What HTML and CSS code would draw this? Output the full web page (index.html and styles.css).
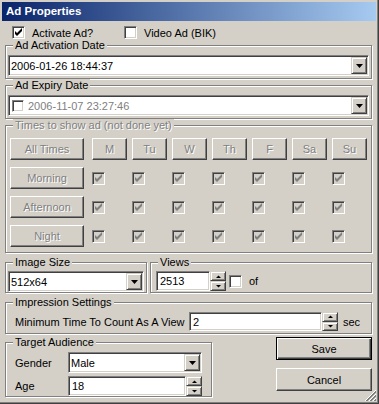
FILE: index.html
```html
<!DOCTYPE html>
<html lang="en">
<head>
    <meta charset="UTF-8">
    <meta name="viewport" content="width=device-width, initial-scale=1.0">
    <title>Ad Properties</title>
    <link rel="stylesheet" href="styles.css">
</head>
<body>
<div class="window">
    <div class="titlebar">Ad Properties</div>

    <div class="content">
        <div class="top-checks">
            <label class="check"><span class="box"><svg width="9" height="9" viewBox="0 0 9 9"><path d="M1 3L3 5L8 0V3L3 8L1 6Z"/></svg></span>Activate Ad?</label>
            <label class="check"><span class="box"></span>Video Ad (BIK)</label>
        </div>

        <fieldset class="group g-date">
            <legend>Ad Activation Date</legend>
            <div class="inner">
                <div class="combo">
                    <span class="combo-text">2006-01-26 18:44:37</span>
                    <span class="drop-btn"><svg width="7" height="4" viewBox="0 0 7 4"><path d="M0 0H7L3.5 4Z"/></svg></span>
                </div>
            </div>
        </fieldset>

        <fieldset class="group g-date">
            <legend>Ad Expiry Date</legend>
            <div class="inner">
                <div class="combo">
                    <span class="box small"></span>
                    <span class="combo-text grey">2006-11-07 23:27:46</span>
                    <span class="drop-btn"><svg width="7" height="4" viewBox="0 0 7 4"><path d="M0 0H7L3.5 4Z"/></svg></span>
                </div>
            </div>
        </fieldset>

        <fieldset class="group g-times">
            <legend class="disabled">Times to show ad (not done yet)</legend>
            <div class="times">
                <button type="button" class="btn disabled">All Times</button>
                <button type="button" class="btn disabled">M</button>
                <button type="button" class="btn disabled">Tu</button>
                <button type="button" class="btn disabled">W</button>
                <button type="button" class="btn disabled">Th</button>
                <button type="button" class="btn disabled">F</button>
                <button type="button" class="btn disabled">Sa</button>
                <button type="button" class="btn disabled">Su</button>

                <button type="button" class="btn disabled">Morning</button>
                <span class="box off"><svg width="9" height="9" viewBox="0 0 9 9"><path d="M1 3L3 5L8 0V3L3 8L1 6Z"/></svg></span>
                <span class="box off"><svg width="9" height="9" viewBox="0 0 9 9"><path d="M1 3L3 5L8 0V3L3 8L1 6Z"/></svg></span>
                <span class="box off"><svg width="9" height="9" viewBox="0 0 9 9"><path d="M1 3L3 5L8 0V3L3 8L1 6Z"/></svg></span>
                <span class="box off"><svg width="9" height="9" viewBox="0 0 9 9"><path d="M1 3L3 5L8 0V3L3 8L1 6Z"/></svg></span>
                <span class="box off"><svg width="9" height="9" viewBox="0 0 9 9"><path d="M1 3L3 5L8 0V3L3 8L1 6Z"/></svg></span>
                <span class="box off"><svg width="9" height="9" viewBox="0 0 9 9"><path d="M1 3L3 5L8 0V3L3 8L1 6Z"/></svg></span>
                <span class="box off"><svg width="9" height="9" viewBox="0 0 9 9"><path d="M1 3L3 5L8 0V3L3 8L1 6Z"/></svg></span>

                <button type="button" class="btn disabled">Afternoon</button>
                <span class="box off"><svg width="9" height="9" viewBox="0 0 9 9"><path d="M1 3L3 5L8 0V3L3 8L1 6Z"/></svg></span>
                <span class="box off"><svg width="9" height="9" viewBox="0 0 9 9"><path d="M1 3L3 5L8 0V3L3 8L1 6Z"/></svg></span>
                <span class="box off"><svg width="9" height="9" viewBox="0 0 9 9"><path d="M1 3L3 5L8 0V3L3 8L1 6Z"/></svg></span>
                <span class="box off"><svg width="9" height="9" viewBox="0 0 9 9"><path d="M1 3L3 5L8 0V3L3 8L1 6Z"/></svg></span>
                <span class="box off"><svg width="9" height="9" viewBox="0 0 9 9"><path d="M1 3L3 5L8 0V3L3 8L1 6Z"/></svg></span>
                <span class="box off"><svg width="9" height="9" viewBox="0 0 9 9"><path d="M1 3L3 5L8 0V3L3 8L1 6Z"/></svg></span>
                <span class="box off"><svg width="9" height="9" viewBox="0 0 9 9"><path d="M1 3L3 5L8 0V3L3 8L1 6Z"/></svg></span>

                <button type="button" class="btn disabled">Night</button>
                <span class="box off"><svg width="9" height="9" viewBox="0 0 9 9"><path d="M1 3L3 5L8 0V3L3 8L1 6Z"/></svg></span>
                <span class="box off"><svg width="9" height="9" viewBox="0 0 9 9"><path d="M1 3L3 5L8 0V3L3 8L1 6Z"/></svg></span>
                <span class="box off"><svg width="9" height="9" viewBox="0 0 9 9"><path d="M1 3L3 5L8 0V3L3 8L1 6Z"/></svg></span>
                <span class="box off"><svg width="9" height="9" viewBox="0 0 9 9"><path d="M1 3L3 5L8 0V3L3 8L1 6Z"/></svg></span>
                <span class="box off"><svg width="9" height="9" viewBox="0 0 9 9"><path d="M1 3L3 5L8 0V3L3 8L1 6Z"/></svg></span>
                <span class="box off"><svg width="9" height="9" viewBox="0 0 9 9"><path d="M1 3L3 5L8 0V3L3 8L1 6Z"/></svg></span>
                <span class="box off"><svg width="9" height="9" viewBox="0 0 9 9"><path d="M1 3L3 5L8 0V3L3 8L1 6Z"/></svg></span>
            </div>
        </fieldset>

        <div class="split">
            <fieldset class="group g-size">
                <legend>Image Size</legend>
                <div class="inner">
                    <div class="combo">
                        <span class="combo-text">512x64</span>
                        <span class="drop-btn"><svg width="7" height="4" viewBox="0 0 7 4"><path d="M0 0H7L3.5 4Z"/></svg></span>
                    </div>
                </div>
            </fieldset>
            <fieldset class="group g-views">
                <legend>Views</legend>
                <div class="views-row">
                    <div class="field w-views">2513</div>
                    <div class="spin">
                        <span class="spin-btn"><svg width="5" height="3" viewBox="0 0 5 3"><path d="M0 3H5L2.5 0.5Z"/></svg></span>
                        <span class="spin-btn"><svg width="5" height="3" viewBox="0 0 5 3"><path d="M0 0H5L2.5 2.5Z"/></svg></span>
                    </div>
                    <span class="box views-box"></span>
                    <span>of</span>
                </div>
            </fieldset>
        </div>

        <fieldset class="group g-impress">
            <legend>Impression Settings</legend>
            <div class="impress-row">
                <span class="min-label">Minimum Time To Count As A View</span>
                <div class="field w-min">2</div>
                <div class="spin">
                    <span class="spin-btn"><svg width="5" height="3" viewBox="0 0 5 3"><path d="M0 3H5L2.5 0.5Z"/></svg></span>
                    <span class="spin-btn"><svg width="5" height="3" viewBox="0 0 5 3"><path d="M0 0H5L2.5 2.5Z"/></svg></span>
                </div>
                <span class="unit">sec</span>
            </div>
        </fieldset>

        <div class="bottom">
            <fieldset class="group g-audience">
                <legend>Target Audience</legend>
                <div class="audience">
                    <div class="form-row">
                        <span class="lbl">Gender</span>
                        <div class="combo w-gender">
                            <span class="combo-text">Male</span>
                            <span class="drop-btn"><svg width="7" height="4" viewBox="0 0 7 4"><path d="M0 0H7L3.5 4Z"/></svg></span>
                        </div>
                    </div>
                    <div class="form-row">
                        <span class="lbl">Age</span>
                        <div class="field w-age">18</div>
                        <div class="spin">
                            <span class="spin-btn"><svg width="5" height="3" viewBox="0 0 5 3"><path d="M0 3H5L2.5 0.5Z"/></svg></span>
                            <span class="spin-btn"><svg width="5" height="3" viewBox="0 0 5 3"><path d="M0 0H5L2.5 2.5Z"/></svg></span>
                        </div>
                    </div>
                </div>
            </fieldset>
            <div class="actions">
                <button type="button" class="btn default">Save</button>
                <button type="button" class="btn">Cancel</button>
            </div>
        </div>
    </div>

    <svg class="grip" width="12" height="12" viewBox="0 0 12 12">
        <path d="M12 1L1 12M12 5L5 12M12 9L9 12" stroke="#fff"/>
        <path d="M12 2L2 12M12 3L3 12M12 6L6 12M12 7L7 12M12 10L10 12M12 11L11 12" stroke="#808080"/>
    </svg>
</div>
</body>
</html>
```

FILE: styles.css
```css
* {
    box-sizing: border-box;
}

body {
    margin: 0;
    background-color: #d4d0c8;
    font-family: "Liberation Sans", Arial, sans-serif;
    font-size: 11px;
    color: #000;
}

.window {
    position: relative;
    width: 379px;
    height: 404px;
    padding: 2px 3px 2px 2px;
    box-shadow: inset -1px -1px 0 #404040, inset -2px -2px 0 #808080;
}

.titlebar {
    height: 19px;
    padding-left: 4px;
    background: linear-gradient(to right, #0a246a, #a6caf0);
    color: white;
    font-weight: bold;
    font-size: 11.5px;
    line-height: 19px;
}

.content {
    padding: 0 4px 0 3px;
}

/* checkboxes */
.top-checks {
    display: flex;
    height: 13px;
    margin-top: 5px;
    padding-left: 7px;
}

.check {
    display: flex;
    align-items: center;
    width: 112px;
}

.check .box {
    margin-right: 7px;
}

.box {
    display: inline-flex;
    align-items: center;
    justify-content: center;
    flex: none;
    width: 13px;
    height: 13px;
    background-color: white;
    border: 1px solid;
    border-color: #808080 #fff #fff #808080;
    box-shadow: inset 1px 1px 0 #404040, inset -1px -1px 0 #d4d0c8;
}

.box svg {
    display: block;
}

.box.off {
    background-color: #d4d0c8;
}

.box.off svg {
    fill: #808080;
}

.box.small {
    width: 12px;
    height: 12px;
    margin-right: 4px;
    margin-left: 1px;
}

/* group boxes */
.group {
    margin: 0;
    padding: 0;
    min-width: 0;
    border: 1px solid #808080;
    box-shadow: 1px 1px 0 #fff, inset 1px 1px 0 #fff;
}

.group legend {
    margin-left: 7px;
    padding: 0 2px;
    line-height: 13px;
    background-color: #d4d0c8;
}

.group legend.disabled,
.disabled {
    color: #808080;
    text-shadow: 1px 1px 0 #fff;
}

.g-date {
    height: 40px;
}

.inner {
    margin-top: 3px;
    padding: 0 2px;
}

/* combo + fields */
.combo {
    display: flex;
    align-items: center;
    height: 21px;
    padding: 1px 1px 1px 2px;
    background-color: white;
    border: 1px solid;
    border-color: #808080 #fff #fff #808080;
    box-shadow: inset 1px 1px 0 #404040, inset -1px -1px 0 #d4d0c8;
}

.combo-text {
    flex: 1;
    white-space: nowrap;
}

.combo-text.grey {
    color: #808080;
}

.drop-btn {
    display: flex;
    align-items: center;
    justify-content: center;
    width: 16px;
    height: 17px;
    background-color: #d4d0c8;
    border: 1px solid;
    border-color: #d4d0c8 #404040 #404040 #d4d0c8;
    box-shadow: inset 1px 1px 0 #fff, inset -1px -1px 0 #808080;
}

.drop-btn svg {
    display: block;
}

.field {
    display: flex;
    align-items: center;
    height: 20px;
    padding-left: 3px;
    background-color: white;
    border: 1px solid;
    border-color: #808080 #fff #fff #808080;
    box-shadow: inset 1px 1px 0 #404040, inset -1px -1px 0 #d4d0c8;
}

.spin {
    display: flex;
    flex-direction: column;
    width: 16px;
    height: 20px;
}

.spin-btn {
    display: flex;
    align-items: center;
    justify-content: center;
    flex: 1;
    background-color: #d4d0c8;
    border: 1px solid;
    border-color: #d4d0c8 #404040 #404040 #d4d0c8;
    box-shadow: inset 1px 1px 0 #fff, inset -1px -1px 0 #808080;
}

.spin-btn svg {
    display: block;
}

/* buttons */
.btn {
    display: flex;
    align-items: center;
    justify-content: center;
    margin: 0;
    padding: 0;
    font: inherit;
    color: #000;
    background-color: #d4d0c8;
    border: 1px solid;
    border-color: #fff #404040 #404040 #fff;
    box-shadow: inset -1px -1px 0 #808080, inset 1px 1px 0 #d4d0c8;
}

.btn.disabled {
    color: #808080;
}

.btn.default {
    border-color: #000;
    box-shadow: inset 1px 1px 0 #fff, inset -1px -1px 0 #404040, inset -2px -2px 0 #808080;
}

/* times grid */
.g-times {
    height: 134px;
}

.times {
    display: grid;
    grid-template-columns: 77px repeat(7, 35px);
    grid-auto-rows: 22px;
    column-gap: 5px;
    row-gap: 7px;
    margin: 6px 0 0 4px;
}

.times .btn {
    width: 100%;
}

.times .btn:nth-child(8n+1) {
    width: 74px;
}

.times .box {
    align-self: center;
    justify-self: start;
}

/* image size / views */
.split {
    display: flex;
    justify-content: space-between;
    margin-top: 3px;
}

.g-size {
    width: 142px;
    height: 37px;
}

.g-size .inner {
    margin-top: 2px;
}

.g-views {
    width: 222px;
    height: 37px;
}

.views-row {
    display: flex;
    align-items: center;
    margin-top: 2px;
    padding-left: 5px;
}

.w-views {
    width: 54px;
}

.views-box {
    margin: 0 7px 0 3px;
}

/* impression */
.g-impress {
    height: 38px;
    margin-top: 3px;
}

.impress-row {
    display: flex;
    align-items: center;
    margin-top: 3px;
    padding-left: 9px;
}

.min-label {
    width: 174px;
    white-space: nowrap;
}

.w-min {
    width: 133px;
    height: 19px;
}

.impress-row .spin {
    height: 19px;
}

.unit {
    margin-left: 5px;
}

/* audience + actions */
.bottom {
    display: flex;
    justify-content: space-between;
    align-items: flex-start;
    margin-top: 2px;
}

.g-audience {
    width: 207px;
    height: 61px;
}

.audience {
    display: flex;
    flex-direction: column;
    gap: 3px;
    margin-top: 3px;
    padding-left: 9px;
}

.form-row {
    display: flex;
    align-items: center;
}

.lbl {
    width: 53px;
}

.w-gender {
    width: 134px;
}

.w-age {
    width: 118px;
}

.actions {
    display: flex;
    flex-direction: column;
    gap: 8px;
    width: 96px;
    margin-top: 1px;
}

.actions .btn {
    height: 23px;
}

.grip {
    position: absolute;
    right: 3px;
    bottom: 3px;
}
```
